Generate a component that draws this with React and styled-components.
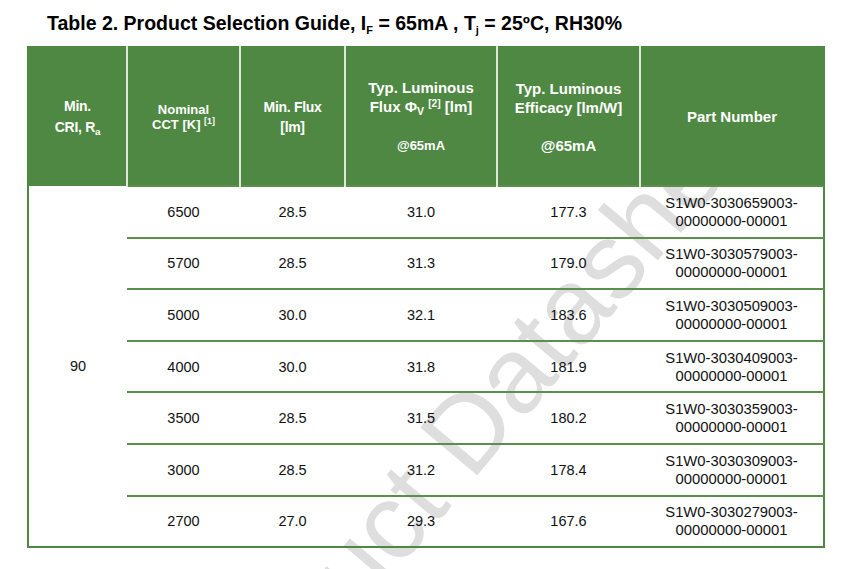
import React from "react";
import styled, { createGlobalStyle } from "styled-components";

const GREEN = "#4f8843";

const GlobalStyle = createGlobalStyle`
  html, body {
    margin: 0;
    padding: 0;
    background: #ffffff;
  }
  body {
    font-family: "Liberation Sans", Arial, sans-serif;
    color: #111;
  }
`;

const Page = styled.div`
  position: relative;
  width: 857px;
  height: 569px;
  overflow: hidden;
  background: #fff;
`;

const Watermark = styled.div`
  position: absolute;
  left: 25px;
  top: 370px;
  width: 894px;
  line-height: 108px;
  font-size: 108px;
  font-family: "Liberation Sans", Arial, sans-serif;
  color: #dedede;
  white-space: nowrap;
  text-align: center;
  transform: rotate(-50deg);
  transform-origin: center center;
  z-index: 0;
  pointer-events: none;
`;

const Content = styled.div`
  position: relative;
  z-index: 1;
  padding: 10px 0 0 27px;
`;

const Title = styled.h2`
  margin: 0 0 9px 20px;
  font-size: 19.5px;
  line-height: 27px;
  font-weight: bold;
  color: #000;

  sub {
    font-size: 11px;
    vertical-align: -4px;
    line-height: 0;
  }
`;

const Table = styled.table`
  border-collapse: collapse;
  width: 796px;
  table-layout: fixed;
  border: 2px solid ${GREEN};
`;

const Th = styled.th`
  background: ${GREEN};
  color: #fff;
  height: 137px;
  padding: 0 4px;
  vertical-align: middle;
  text-align: center;
  font-weight: bold;
  font-size: ${(p) => p.$size || 15}px;
  line-height: ${(p) => p.$lh || 19}px;
  font-family: ${(p) =>
    p.$narrow
      ? `"Liberation Sans Narrow", "Arial Narrow", "Liberation Sans", Arial, sans-serif`
      : `"Liberation Sans", Arial, sans-serif`};
  letter-spacing: ${(p) => (p.$narrow ? "-0.3px" : "0")};
  border-left: 2px solid #dde7da;

  &:first-child {
    border-left: 2px solid ${GREEN};
  }

  sub {
    font-size: 0.7em;
    vertical-align: -3px;
    line-height: 0;
  }
  sup {
    font-size: 0.68em;
    vertical-align: 5px;
    line-height: 0;
  }
`;

const Small = styled.span`
  font-size: ${(p) => p.$size}px;
`;

const Row = styled.tr`
  height: 51.6px;
`;

const Td = styled.td`
  border-top: 2px solid #5a904c;
  text-align: center;
  vertical-align: middle;
  font-size: 14.5px;
  line-height: 18px;
  padding: 0;
  color: #111;
`;

const CriCell = styled.td`
  text-align: center;
  vertical-align: middle;
  font-size: 14.5px;
  padding: 0;
  color: #111;
`;

const Part = styled.span`
  display: block;
  font-size: 14.8px;
`;

const rows = [
  ["6500", "28.5", "31.0", "177.3", "S1W0-3030659003-"],
  ["5700", "28.5", "31.3", "179.0", "S1W0-3030579003-"],
  ["5000", "30.0", "32.1", "183.6", "S1W0-3030509003-"],
  ["4000", "30.0", "31.8", "181.9", "S1W0-3030409003-"],
  ["3500", "28.5", "31.5", "180.2", "S1W0-3030359003-"],
  ["3000", "28.5", "31.2", "178.4", "S1W0-3030309003-"],
  ["2700", "27.0", "29.3", "167.6", "S1W0-3030279003-"],
];

export default function App() {
  return (
    <Page>
      <GlobalStyle />
      <Watermark>Product Datasheet</Watermark>
      <Content>
        <Title>
          Table 2. Product Selection Guide, I<sub>F</sub> = 65mA , T<sub>j</sub> = 25ºC, RH30%
        </Title>
        <Table>
          <colgroup>
            <col style={{ width: 99 }} />
            <col style={{ width: 113 }} />
            <col style={{ width: 105 }} />
            <col style={{ width: 152 }} />
            <col style={{ width: 143 }} />
            <col style={{ width: 184 }} />
          </colgroup>
          <thead>
            <tr>
              <Th $narrow $size={14} $lh={21}>
                Min.
                <br />
                CRI, R<sub>a</sub>
              </Th>
              <Th $size={13} $lh={15}>
                Nominal
                <br />
                CCT [K] <sup>[1]</sup>
              </Th>
              <Th $narrow $size={14} $lh={20}>
                Min. Flux
                <br />
                [lm]
              </Th>
              <Th>
                Typ. Luminous
                <br />
                Flux Φ<sub>V</sub> <sup>[2]</sup> [lm]
                <br />
                <br />
                <Small $size={13}>@65mA</Small>
              </Th>
              <Th>
                Typ. Luminous
                <br />
                Efficacy [lm/W]
                <br />
                <br />
                @65mA
              </Th>
              <Th>Part Number</Th>
            </tr>
          </thead>
          <tbody>
            {rows.map((r, i) => (
              <Row key={r[0]}>
                {i === 0 && <CriCell rowSpan={rows.length}>90</CriCell>}
                <Td>{r[0]}</Td>
                <Td>{r[1]}</Td>
                <Td>{r[2]}</Td>
                <Td>{r[3]}</Td>
                <Td>
                  <Part>{r[4]}</Part>
                  <Part>00000000-00001</Part>
                </Td>
              </Row>
            ))}
          </tbody>
        </Table>
      </Content>
    </Page>
  );
}
